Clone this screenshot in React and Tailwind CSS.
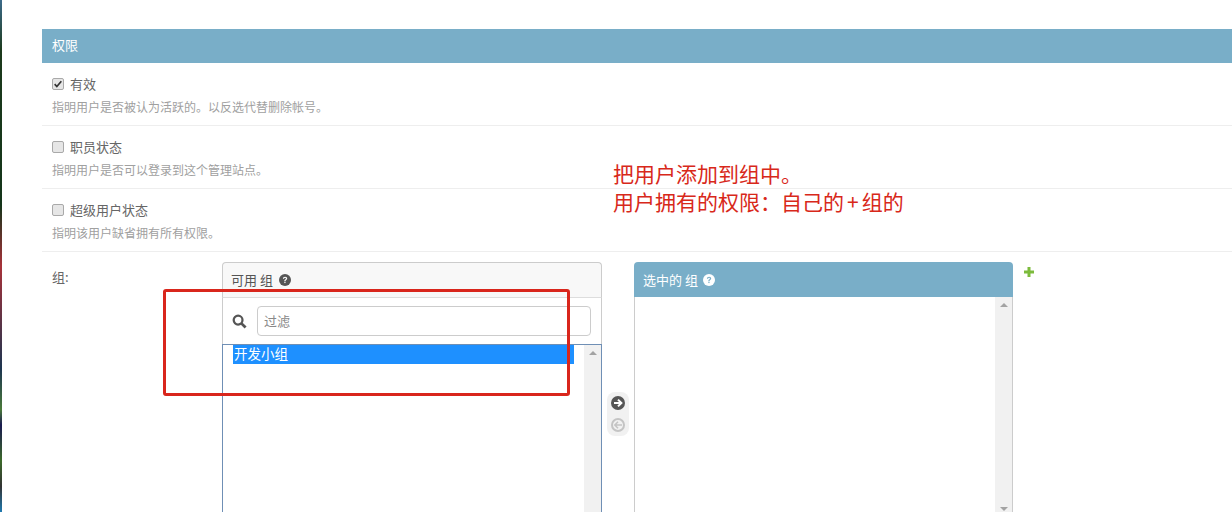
import React from "react";

function Help({ light }) {
  return (
    <svg viewBox="0 0 16 16" className="w-[12px] h-[12px] shrink-0">
      <circle cx="8" cy="8" r="8" fill={light ? "#ffffff" : "#555555"} />
      <path d="M5.2 6.3C5.3 4.6 6.5 3.7 8.1 3.7C9.8 3.7 10.9 4.7 10.9 6C10.9 7.2 10.1 7.7 9.4 8.2C8.8 8.6 8.6 8.9 8.6 9.6H7.1C7.1 8.5 7.4 8 8.2 7.4C8.9 6.9 9.2 6.6 9.2 6.1C9.2 5.5 8.8 5.1 8.1 5.1C7.3 5.1 6.9 5.6 6.8 6.3Z" fill={light ? "#79aec8" : "#ffffff"} />
      <rect x="7.1" y="10.4" width="1.6" height="1.7" fill={light ? "#79aec8" : "#ffffff"} />
    </svg>
  );
}

function Check({ checked }) {
  return (
    <span className="w-[12px] h-[12px] rounded-[2px] border border-[#a9a9a9] bg-[#e6e6e6] flex items-center justify-center shrink-0">
      {checked && (
        <svg viewBox="0 0 12 12" className="w-[10px] h-[10px]">
          <path d="M2 6.2L4.6 9L10 2.6" fill="none" stroke="#333333" strokeWidth="2" />
        </svg>
      )}
    </span>
  );
}

function Row({ label, help, checked }) {
  return (
    <div className="h-[63px] border-b border-[#eeeeee] pl-[10px] pt-[13px]">
      <div className="flex items-center gap-[6px] h-[16px]">
        <Check checked={checked} />
        <span className="text-[13px] leading-[16px] text-[#666666]">{label}</span>
      </div>
      <p className="mt-[8px] text-[12px] leading-[14px] text-[#a0a0a0]">{help}</p>
    </div>
  );
}

function Scrollbar({ bottom }) {
  return (
    <div className="w-[17px] h-full shrink-0 bg-[#f1f1f1] flex flex-col justify-between items-center pt-[6px] pb-[2px]">
      <span className="w-0 h-0 border-x-[4px] border-x-transparent border-b-[4px] border-b-[#a3a3a3]" />
      {bottom && <span className="w-0 h-0 border-x-[4px] border-x-transparent border-t-[4px] border-t-[#a3a3a3]" />}
    </div>
  );
}

export default function App() {
  return (
    <div
      className="relative w-[1232px] h-[512px] overflow-hidden bg-white flex"
      style={{ fontFamily: '"Noto Sans CJK SC", "Liberation Sans", sans-serif' }}
    >
      <div className="w-[2px] h-full shrink-0 bg-[linear-gradient(180deg,#3d6b8a_0%,#1c3a1c_10%,#14351a_40%,#a8323a_52%,#1d3550_72%,#4a7a3a_80%,#1a1a50_83%,#3c6a2a_90%,#333333_95%,#1f7ab0_100%)]" />
      <div className="flex-1 pl-[40px] pt-[29px] min-w-0">
        <h2 className="h-[34px] bg-[#79aec8] text-white text-[13px] leading-[32px] pl-[10px] font-normal">权限</h2>
        <Row checked label="有效" help="指明用户是否被认为活跃的。以反选代替删除帐号。" />
        <Row label="职员状态" help="指明用户是否可以登录到这个管理站点。" />
        <Row label="超级用户状态" help="指明该用户缺省拥有所有权限。" />

        <div className="flex pl-[10px] pt-[10px]">
          <label className="w-[170px] shrink-0 pt-[6px] text-[13px] leading-[18px] text-[#666666]">组:</label>

          <div className="w-[380px] h-[300px] shrink-0 flex flex-col">
            <div className="h-[36px] shrink-0 bg-[#f8f8f8] border border-[#cccccc] border-b-[#dddddd] rounded-t-[4px] flex items-center gap-[6px] pl-[8px] text-[13px] text-[#555555]">
              <span>可用 组</span>
              <Help />
            </div>
            <div className="h-[46px] shrink-0 border-x border-[#cccccc] flex items-center pl-[9px] pr-[10px]">
              <svg viewBox="0 0 16 16" className="w-[15px] h-[15px] shrink-0">
                <circle cx="6.5" cy="6.5" r="4.7" fill="none" stroke="#555555" strokeWidth="2.4" />
                <path d="M10 10L14.5 14.5" stroke="#555555" strokeWidth="3" />
              </svg>
              <div className="ml-[10px] flex-1 h-[30px] border border-[#cccccc] rounded-[4px] pl-[6px] text-[13px] leading-[28px] text-[#888888]">过滤</div>
            </div>
            <div className="flex-1 flex border border-[#6f8fb5] border-b-0 min-h-0">
              <div className="flex-1 pl-[10px] pr-[10px] min-w-0">
                <div className="h-[19px] bg-[#1e90ff] text-white text-[13.5px] leading-[17px] pl-[1px]">开发小组</div>
              </div>
              <Scrollbar />
            </div>
          </div>

          <div className="w-[22px] h-[44px] ml-[5px] mr-[5px] mt-[130px] shrink-0 bg-[#f1f1f1] rounded-[8px] flex flex-col items-center justify-center gap-[8px]">
            <svg viewBox="0 0 14 14" className="w-[14px] h-[14px]">
              <circle cx="7" cy="7" r="7" fill="#555555" />
              <path d="M3 7H10M7 3.6L10.4 7L7 10.4" fill="none" stroke="#ffffff" strokeWidth="2" />
            </svg>
            <svg viewBox="0 0 14 14" className="w-[14px] h-[14px]">
              <circle cx="7" cy="7" r="6" fill="none" stroke="#c4c4c4" strokeWidth="2" />
              <path d="M11 7H4M7 3.8L3.8 7L7 10.2" fill="none" stroke="#c4c4c4" strokeWidth="1.5" />
            </svg>
          </div>

          <div className="w-[379px] h-[300px] shrink-0 flex flex-col">
            <div className="h-[35px] shrink-0 bg-[#79aec8] rounded-t-[4px] flex items-center gap-[5px] pl-[9px] text-[13px] text-white">
              <span>选中的 组</span>
              <Help light />
            </div>
            <div className="flex-1 flex justify-end border-x border-[#cccccc] min-h-0">
              <div className="h-[216px]">
                <Scrollbar bottom />
              </div>
            </div>
          </div>

          <svg viewBox="0 0 12 12" className="w-[12px] h-[12px] ml-[10px] mt-[4px] shrink-0">
            <path d="M6 1V11M1 6H11" stroke="#7cbb3c" strokeWidth="3" />
          </svg>
        </div>
      </div>

      <div className="absolute left-[613px] top-[159px] text-[21px] leading-[28px] text-[#d8281a] whitespace-nowrap">
        <div>把用户添加到组中。</div>
        <div>用户拥有的权限{"\uFF1A"}自己的<span className="mx-[3px]">+</span>组的</div>
      </div>
      <div className="absolute left-[163px] top-[289px] w-[407px] h-[107px] border-[3px] border-[#d9261c] rounded-[3px]" />
    </div>
  );
}
